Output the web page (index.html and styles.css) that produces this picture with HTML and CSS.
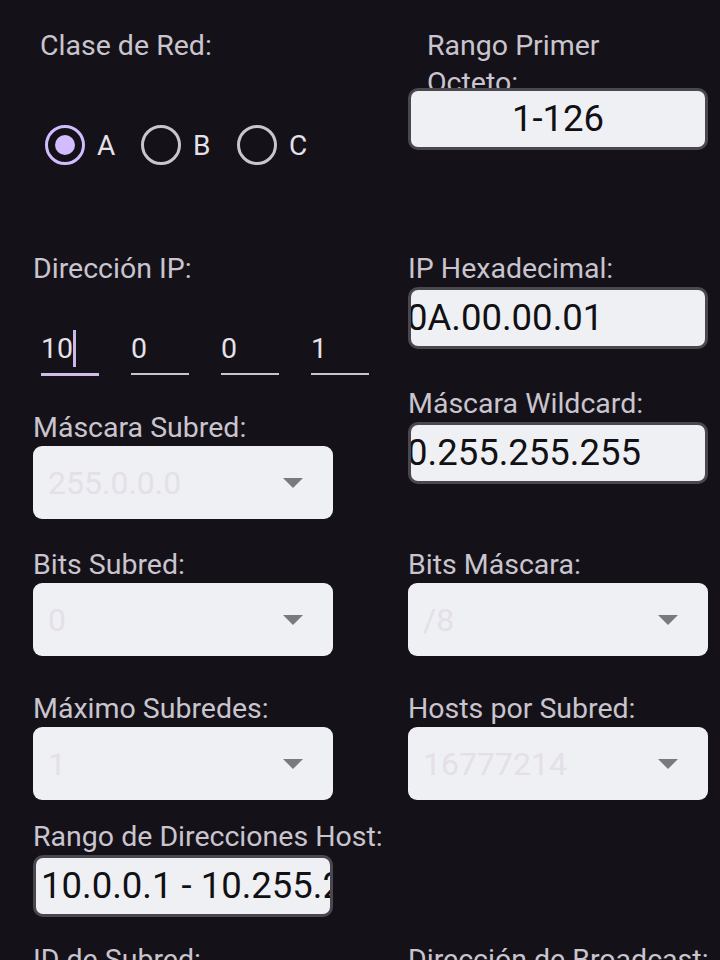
FILE: index.html
```html
<!DOCTYPE html>
<html lang="es">
<head>
<meta charset="utf-8">
<title>Calculadora IP</title>
<link rel="stylesheet" href="styles.css">
</head>
<body>
<div class="screen">
  <div class="row row-top">
    <div class="cell cell-class">
      <div class="label">Clase de Red:</div>
      <div class="radios">
        <div class="radio checked"><span class="ring"></span><span class="rtext">A</span></div>
        <div class="radio"><span class="ring"></span><span class="rtext">B</span></div>
        <div class="radio"><span class="ring"></span><span class="rtext">C</span></div>
      </div>
    </div>
    <div class="cell">
      <div class="label label-wrap">Rango Primer Octeto:</div>
      <div class="tbox centered">1-126</div>
    </div>
  </div>

  <div class="row row-ip">
    <div class="cell">
      <div class="label">Dirección IP:</div>
      <div class="ip">
        <div class="oct focused">10<span class="caret"></span></div>
        <div class="oct">0</div>
        <div class="oct">0</div>
        <div class="oct">1</div>
      </div>
      <div class="label label-mask">Máscara Subred:</div>
      <div class="dd"><span class="ph">255.0.0.0</span><span class="arrow"></span></div>
    </div>
    <div class="cell">
      <div class="label">IP Hexadecimal:</div>
      <div class="tbox flush">0A.00.00.01</div>
      <div class="label label-wild">Máscara Wildcard:</div>
      <div class="tbox flush">0.255.255.255</div>
    </div>
  </div>

  <div class="row row-bits">
    <div class="cell">
      <div class="label">Bits Subred:</div>
      <div class="dd"><span class="ph">0</span><span class="arrow"></span></div>
    </div>
    <div class="cell">
      <div class="label">Bits Máscara:</div>
      <div class="dd"><span class="ph">/8</span><span class="arrow"></span></div>
    </div>
  </div>

  <div class="row row-max">
    <div class="cell">
      <div class="label">Máximo Subredes:</div>
      <div class="dd"><span class="ph">1</span><span class="arrow"></span></div>
    </div>
    <div class="cell">
      <div class="label">Hosts por Subred:</div>
      <div class="dd"><span class="ph">16777214</span><span class="arrow"></span></div>
    </div>
  </div>

  <div class="row row-hosts">
    <div class="cell">
      <div class="label">Rango de Direcciones Host:</div>
      <div class="tbox padded">10.0.0.1 - 10.255.255.254</div>
    </div>
  </div>

  <div class="row row-last">
    <div class="cell">
      <div class="label">ID de Subred:</div>
    </div>
    <div class="cell">
      <div class="label">Dirección de Broadcast:</div>
    </div>
  </div>
</div>
</body>
</html>
```

FILE: styles.css
```css
html, body {
  margin: 0;
  padding: 0;
  height: 960px;
  overflow: hidden;
  background: #141218;
}

body {
  font-family: Roboto, "Liberation Sans", sans-serif;
}

.screen {
  display: flex;
  flex-direction: column;
  padding: 27px 0 0 33px;
}

.row {
  display: grid;
  grid-template-columns: 300px 300px;
  column-gap: 75px;
  align-items: start;
}

.label {
  font-size: 28.5px;
  line-height: 37px;
  height: 37px;
  color: #cac4cf;
  white-space: nowrap;
}

/* top row */
.cell-class {
  padding-left: 7px;
}

.radios {
  display: flex;
  margin-top: 61px;
  margin-left: 5px;
}

.radio {
  width: 96px;
  display: flex;
  align-items: center;
  gap: 12px;
}

.ring {
  width: 40px;
  height: 40px;
  box-sizing: border-box;
  border: 3px solid #cac4d0;
  border-radius: 50%;
  display: flex;
  align-items: center;
  justify-content: center;
  flex: none;
}

.radio.checked .ring {
  border-color: #d0bcff;
}

.radio.checked .ring::after {
  content: "";
  width: 20px;
  height: 20px;
  border-radius: 50%;
  background: #d0bcff;
}

.rtext {
  font-size: 28px;
  line-height: 37px;
  color: #e6e0e9;
}

.label-wrap {
  white-space: normal;
  width: 220px;
  height: 61px;
  overflow: hidden;
  padding-left: 19px;
}

.row-top {
  margin-bottom: 85px;
}

/* text boxes */
.tbox {
  height: 62px;
  box-sizing: border-box;
  border: 3px solid #4a484e;
  border-radius: 10px;
  background: #eff0f3;
  color: #111014;
  font-size: 36.5px;
  line-height: 56px;
  white-space: nowrap;
  overflow: hidden;
}

.tbox.centered {
  text-align: center;
}

.tbox.flush {
  text-indent: -4px;
}

.tbox.padded {
  padding-left: 5px;
}

/* IP octets */
.ip {
  display: flex;
  gap: 32px;
  margin: 43px 0 0 8px;
}

.oct {
  flex: none;
  width: 58px;
  height: 45px;
  box-sizing: border-box;
  border-bottom: 2px solid #c8c4cb;
  font-size: 28.5px;
  line-height: 37px;
  color: #e6e0e9;
  white-space: nowrap;
}

.oct.focused {
  height: 46px;
  border-bottom: 3px solid #cdbde8;
}

.caret {
  display: inline-block;
  width: 3px;
  height: 37px;
  background: #cbb8e8;
  vertical-align: top;
}

.label-mask {
  margin-top: 33px;
}

.label-wild {
  margin-top: 36px;
}

/* dropdowns */
.dd {
  height: 73px;
  box-sizing: border-box;
  border-radius: 9px;
  background: #eff0f3;
  display: flex;
  align-items: center;
  justify-content: space-between;
  padding: 0 30px 0 15px;
}

.ph {
  font-size: 32px;
  color: #e4dfe8;
}

.arrow {
  width: 0;
  height: 0;
  border-left: 10px solid transparent;
  border-right: 10px solid transparent;
  border-top: 10px solid #7a7a7c;
}

.row-bits {
  margin-top: 27px;
}

.row-max {
  margin-top: 34px;
}

.row-hosts {
  margin-top: 18px;
}

.row-last {
  margin-top: 24px;
}
```
